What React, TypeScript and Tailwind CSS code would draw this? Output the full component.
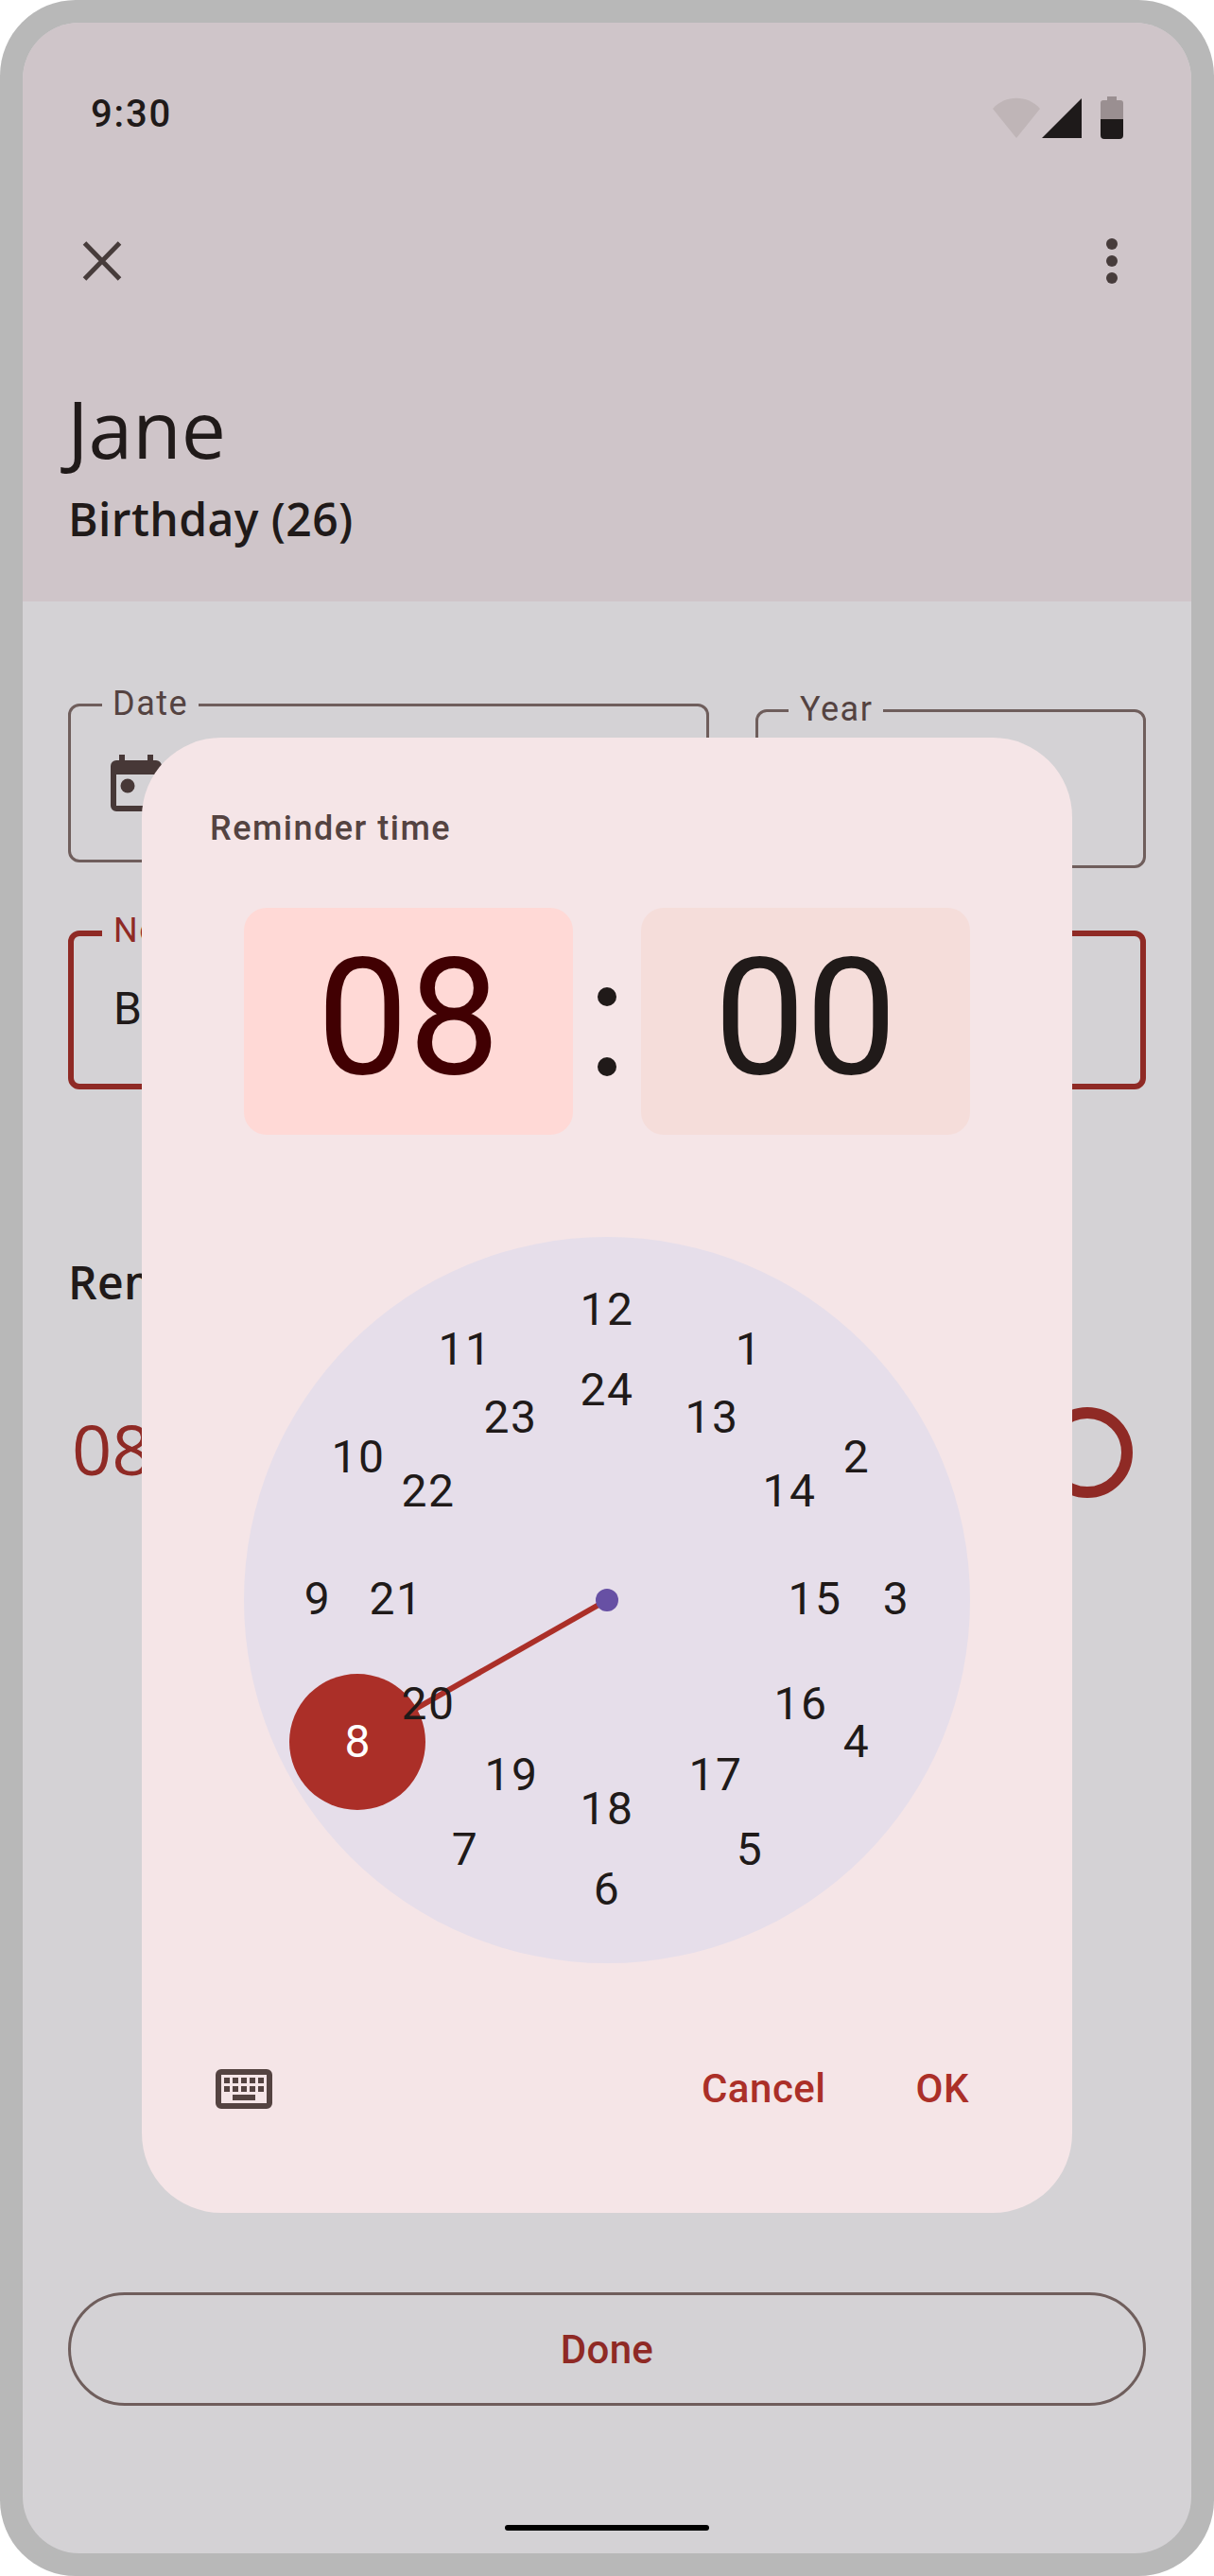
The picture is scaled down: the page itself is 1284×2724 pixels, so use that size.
const HOURS = [
  { label: '12', x: 642, y: 1385 },
  { label: '1', x: 792, y: 1427 },
  { label: '2', x: 906, y: 1541 },
  { label: '3', x: 948, y: 1691 },
  { label: '4', x: 906, y: 1842 },
  { label: '5', x: 793, y: 1956 },
  { label: '6', x: 642, y: 1998 },
  { label: '7', x: 492, y: 1956 },
  { label: '9', x: 336, y: 1691 },
  { label: '10', x: 379, y: 1541 },
  { label: '11', x: 492, y: 1427 },
  { label: '24', x: 642, y: 1470 },
  { label: '13', x: 753, y: 1499 },
  { label: '14', x: 835, y: 1577 },
  { label: '15', x: 862, y: 1691 },
  { label: '16', x: 847, y: 1802 },
  { label: '17', x: 757, y: 1877 },
  { label: '18', x: 642, y: 1913 },
  { label: '19', x: 541, y: 1877 },
  { label: '20', x: 453, y: 1802 },
  { label: '21', x: 419, y: 1691 },
  { label: '22', x: 453, y: 1577 },
  { label: '23', x: 540, y: 1499 },
];

const CX = 642;
const CY = 1692;
const CLOCK_LEFT = 258;
const CLOCK_TOP = 1308;

function ClockFace() {
  return (
    <div className="relative w-[768px] h-[768px] rounded-full bg-[#e6deea]">
      <svg className="absolute inset-0" width="768" height="768" viewBox="0 0 768 768">
        <line x1={CX - CLOCK_LEFT} y1={CY - CLOCK_TOP} x2={378 - CLOCK_LEFT} y2={1842 - CLOCK_TOP} stroke="#ab2f28" strokeWidth="6" />
        <circle cx={CX - CLOCK_LEFT} cy={CY - CLOCK_TOP} r="12" fill="#6750a4" />
        <circle cx={378 - CLOCK_LEFT} cy={1842 - CLOCK_TOP} r="72" fill="#ab2f28" />
      </svg>
      {HOURS.map(({ label, x, y }) => (
        <span
          key={label}
          className="absolute -translate-x-1/2 -translate-y-1/2 text-[48px] leading-none tracking-[1.5px] text-[#201a19] font-['Roboto',sans-serif]"
          style={{ left: x - CLOCK_LEFT, top: y - CLOCK_TOP }}
        >
          {label}
        </span>
      ))}
      <span
        className="absolute -translate-x-1/2 -translate-y-1/2 text-[48px] leading-none text-white font-['Roboto',sans-serif]"
        style={{ left: 378 - CLOCK_LEFT, top: 1842 - CLOCK_TOP }}
      >
        8
      </span>
    </div>
  );
}

export default function App() {
  return (
    <div className="relative w-[1284px] h-[2724px] bg-[#b8b8b8] rounded-[80px] p-6 overflow-hidden">
      <div className="relative flex flex-col w-full h-full rounded-[60px] bg-[#d4d2d5] overflow-hidden">
        {/* Header */}
        <header className="flex flex-col h-[612px] bg-[#cfc5c9] shrink-0">
          <div className="flex items-start justify-between h-[48px] mt-[72px] px-[72px]">
            <span className="mt-[1px] text-[40px] leading-[48px] font-medium tracking-[1.8px] text-[#201a19] font-['Roboto',sans-serif]">9:30</span>
            <div className="flex items-start mt-[5px]">
              <svg className="mt-[2px]" width="50" height="44" viewBox="0 0 50 44">
                <path d="M0 12 C13 -3 37 -3 50 12 L25 43 Z" fill="#bfb5b7" />
              </svg>
              <svg className="ml-[1px] mt-[2px]" width="44" height="44" viewBox="0 0 44 44">
                <path d="M1 43 L43 1 V43 Z" fill="#1e1a1a" />
              </svg>
              <svg className="ml-[19px] mt-[1px]" width="24" height="46" viewBox="0 0 24 46">
                <path d="M7 0 H17 V4 H21 Q24 4 24 7 V24 H0 V7 Q0 4 3 4 H7 Z" fill="#9a8f91" />
                <path d="M0 24 H24 V41 Q24 45 20 45 H4 Q0 45 0 41 Z" fill="#1e1a1a" />
              </svg>
            </div>
          </div>
          <div className="flex items-center justify-between h-[72px] mt-[96px] pl-[60px] pr-[78px]">
            <svg width="48" height="48" viewBox="0 0 48 48" stroke="#473c3b" strokeWidth="5">
              <path d="M5.5 5 L42.5 43 M42.5 5 L5.5 43" />
            </svg>
            <div className="flex flex-col gap-[6px]">
              <span className="w-3 h-3 rounded-full bg-[#473c3b]" />
              <span className="w-3 h-3 rounded-full bg-[#473c3b]" />
              <span className="w-3 h-3 rounded-full bg-[#473c3b]" />
            </div>
          </div>
          <h1 className="mt-[85px] ml-[47px] text-[84px] leading-[112px] font-normal text-[#201a19] font-['Open_Sans',sans-serif]">Jane</h1>
          <p className="mt-[10px] ml-[48px] text-[48px] leading-[60px] font-semibold tracking-[0.4px] text-[#201a19] font-['Open_Sans',sans-serif]">Birthday (26)</p>
        </header>

        {/* Form behind the dialog */}
        <div className="flex-1 px-[48px]">
          <div className="flex justify-between items-start mt-[108px]">
            <div className="relative w-[678px] h-[168px] pt-[51px] pl-[42px] border-[3px] border-[#6f5e5c] rounded-xl">
              <span className="absolute left-[33px] -top-[25px] w-[102px] pl-[11px] bg-[#d4d2d5] text-[36px] leading-[44px] tracking-[1.5px] text-[#544341] font-['Roboto',sans-serif]">Date</span>
              <svg width="54" height="60" viewBox="0 0 54 60">
                <path fillRule="evenodd" d="M9 0h6v6h24V0h6v6h3a6 6 0 0 1 6 6v42a6 6 0 0 1-6 6H6a6 6 0 0 1-6-6V12a6 6 0 0 1 6-6h3zM6 21v33h42V21z" fill="#473837" />
                <circle cx="18" cy="33" r="7.5" fill="#473837" />
              </svg>
            </div>
            <div className="relative w-[413px] h-[168px] mt-[6px] border-[3px] border-[#6f5e5c] rounded-xl">
              <span className="absolute left-[32px] -top-[25px] w-[100px] pl-[12px] bg-[#d4d2d5] text-[36px] leading-[44px] tracking-[1.5px] text-[#544341] font-['Roboto',sans-serif]">Year</span>
            </div>
          </div>
          <div className="relative mt-[66px] h-[168px] border-[6px] border-[#8f2a25] rounded-xl">
            <span className="absolute left-[30px] -top-[28px] w-[102px] pl-[12px] bg-[#d4d2d5] text-[36px] leading-[44px] tracking-[1.5px] text-[#8f2a25] font-['Roboto',sans-serif]">Note</span>
            <span className="absolute left-[42px] top-[49px] text-[48px] leading-[56px] text-[#201a19] font-['Roboto',sans-serif]">Birthday</span>
          </div>
          <p className="mt-[174px] text-[48px] leading-[60px] font-semibold tracking-[0.4px] text-[#201a19] font-['Open_Sans',sans-serif]">Reminder</p>
          <div className="flex items-start justify-between mt-[96px]">
            <span className="ml-[4px] text-[74px] leading-[100px] text-[#8f2a25] font-['Open_Sans',sans-serif]">08:00</span>
            <span className="w-[96px] h-[96px] mt-[6px] mr-[14px] rounded-full border-[12px] border-[#8f2a25]" />
          </div>
        </div>

        {/* Done button */}
        <div className="absolute left-[48px] right-[48px] bottom-[156px] flex items-center justify-center h-[120px] rounded-full border-[3px] border-[#6f5e5c]">
          <span className="text-[42px] font-medium tracking-[0.3px] text-[#8f2a25] font-['Roboto',sans-serif]">Done</span>
        </div>

        <div className="absolute left-1/2 -translate-x-1/2 bottom-[24px] w-[216px] h-[6px] rounded-full bg-black" />

        {/* Time picker dialog */}
        <div className="absolute left-[126px] top-[756px] flex flex-col w-[984px] h-[1560px] rounded-[84px] bg-[#f5e5e7] px-[72px]">
          <p className="mt-[72px] text-[36px] leading-[48px] font-medium tracking-[1.5px] text-[#544341] font-['Roboto',sans-serif]">Reminder time</p>
          <div className="flex items-center justify-center mt-[60px]">
            <div className="flex items-center justify-center w-[348px] h-[240px] pb-[8px] rounded-[24px] bg-[#ffd9d6] text-[172px] text-[#410002] font-['Roboto',sans-serif]">08</div>
            <div className="flex flex-col items-center justify-center gap-[54px] w-[72px] mt-[22px]">
              <span className="w-[20px] h-[20px] rounded-full bg-[#201a19]" />
              <span className="w-[20px] h-[20px] rounded-full bg-[#201a19]" />
            </div>
            <div className="flex items-center justify-center w-[348px] h-[240px] pb-[8px] rounded-[24px] bg-[#f5ddda] text-[172px] text-[#201a19] font-['Roboto',sans-serif]">00</div>
          </div>
          <div className="flex justify-center mt-[108px]">
            <ClockFace />
          </div>
          <div className="flex items-center justify-between mt-[101px] pl-[6px] pr-[37px]">
            <svg width="60" height="42" viewBox="0 0 60 42">
              <rect x="3" y="3" width="54" height="36" rx="3" fill="none" stroke="#544341" strokeWidth="6" />
              <path d="M9 9h6v6H9zM18 9h6v6h-6zM27 9h6v6h-6zM36 9h6v6h-6zM45 9h6v6h-6zM9 18h6v6H9zM18 18h6v6h-6zM27 18h6v6h-6zM36 18h6v6h-6zM45 18h6v6h-6zM18 27h24v6H18z" fill="#544341" />
            </svg>
            <div className="flex items-center gap-[95px] text-[42px] font-medium tracking-[0.5px] text-[#ab2f28] font-['Roboto',sans-serif]">
              <span>Cancel</span>
              <span>OK</span>
            </div>
          </div>
        </div>
      </div>
    </div>
  );
}
